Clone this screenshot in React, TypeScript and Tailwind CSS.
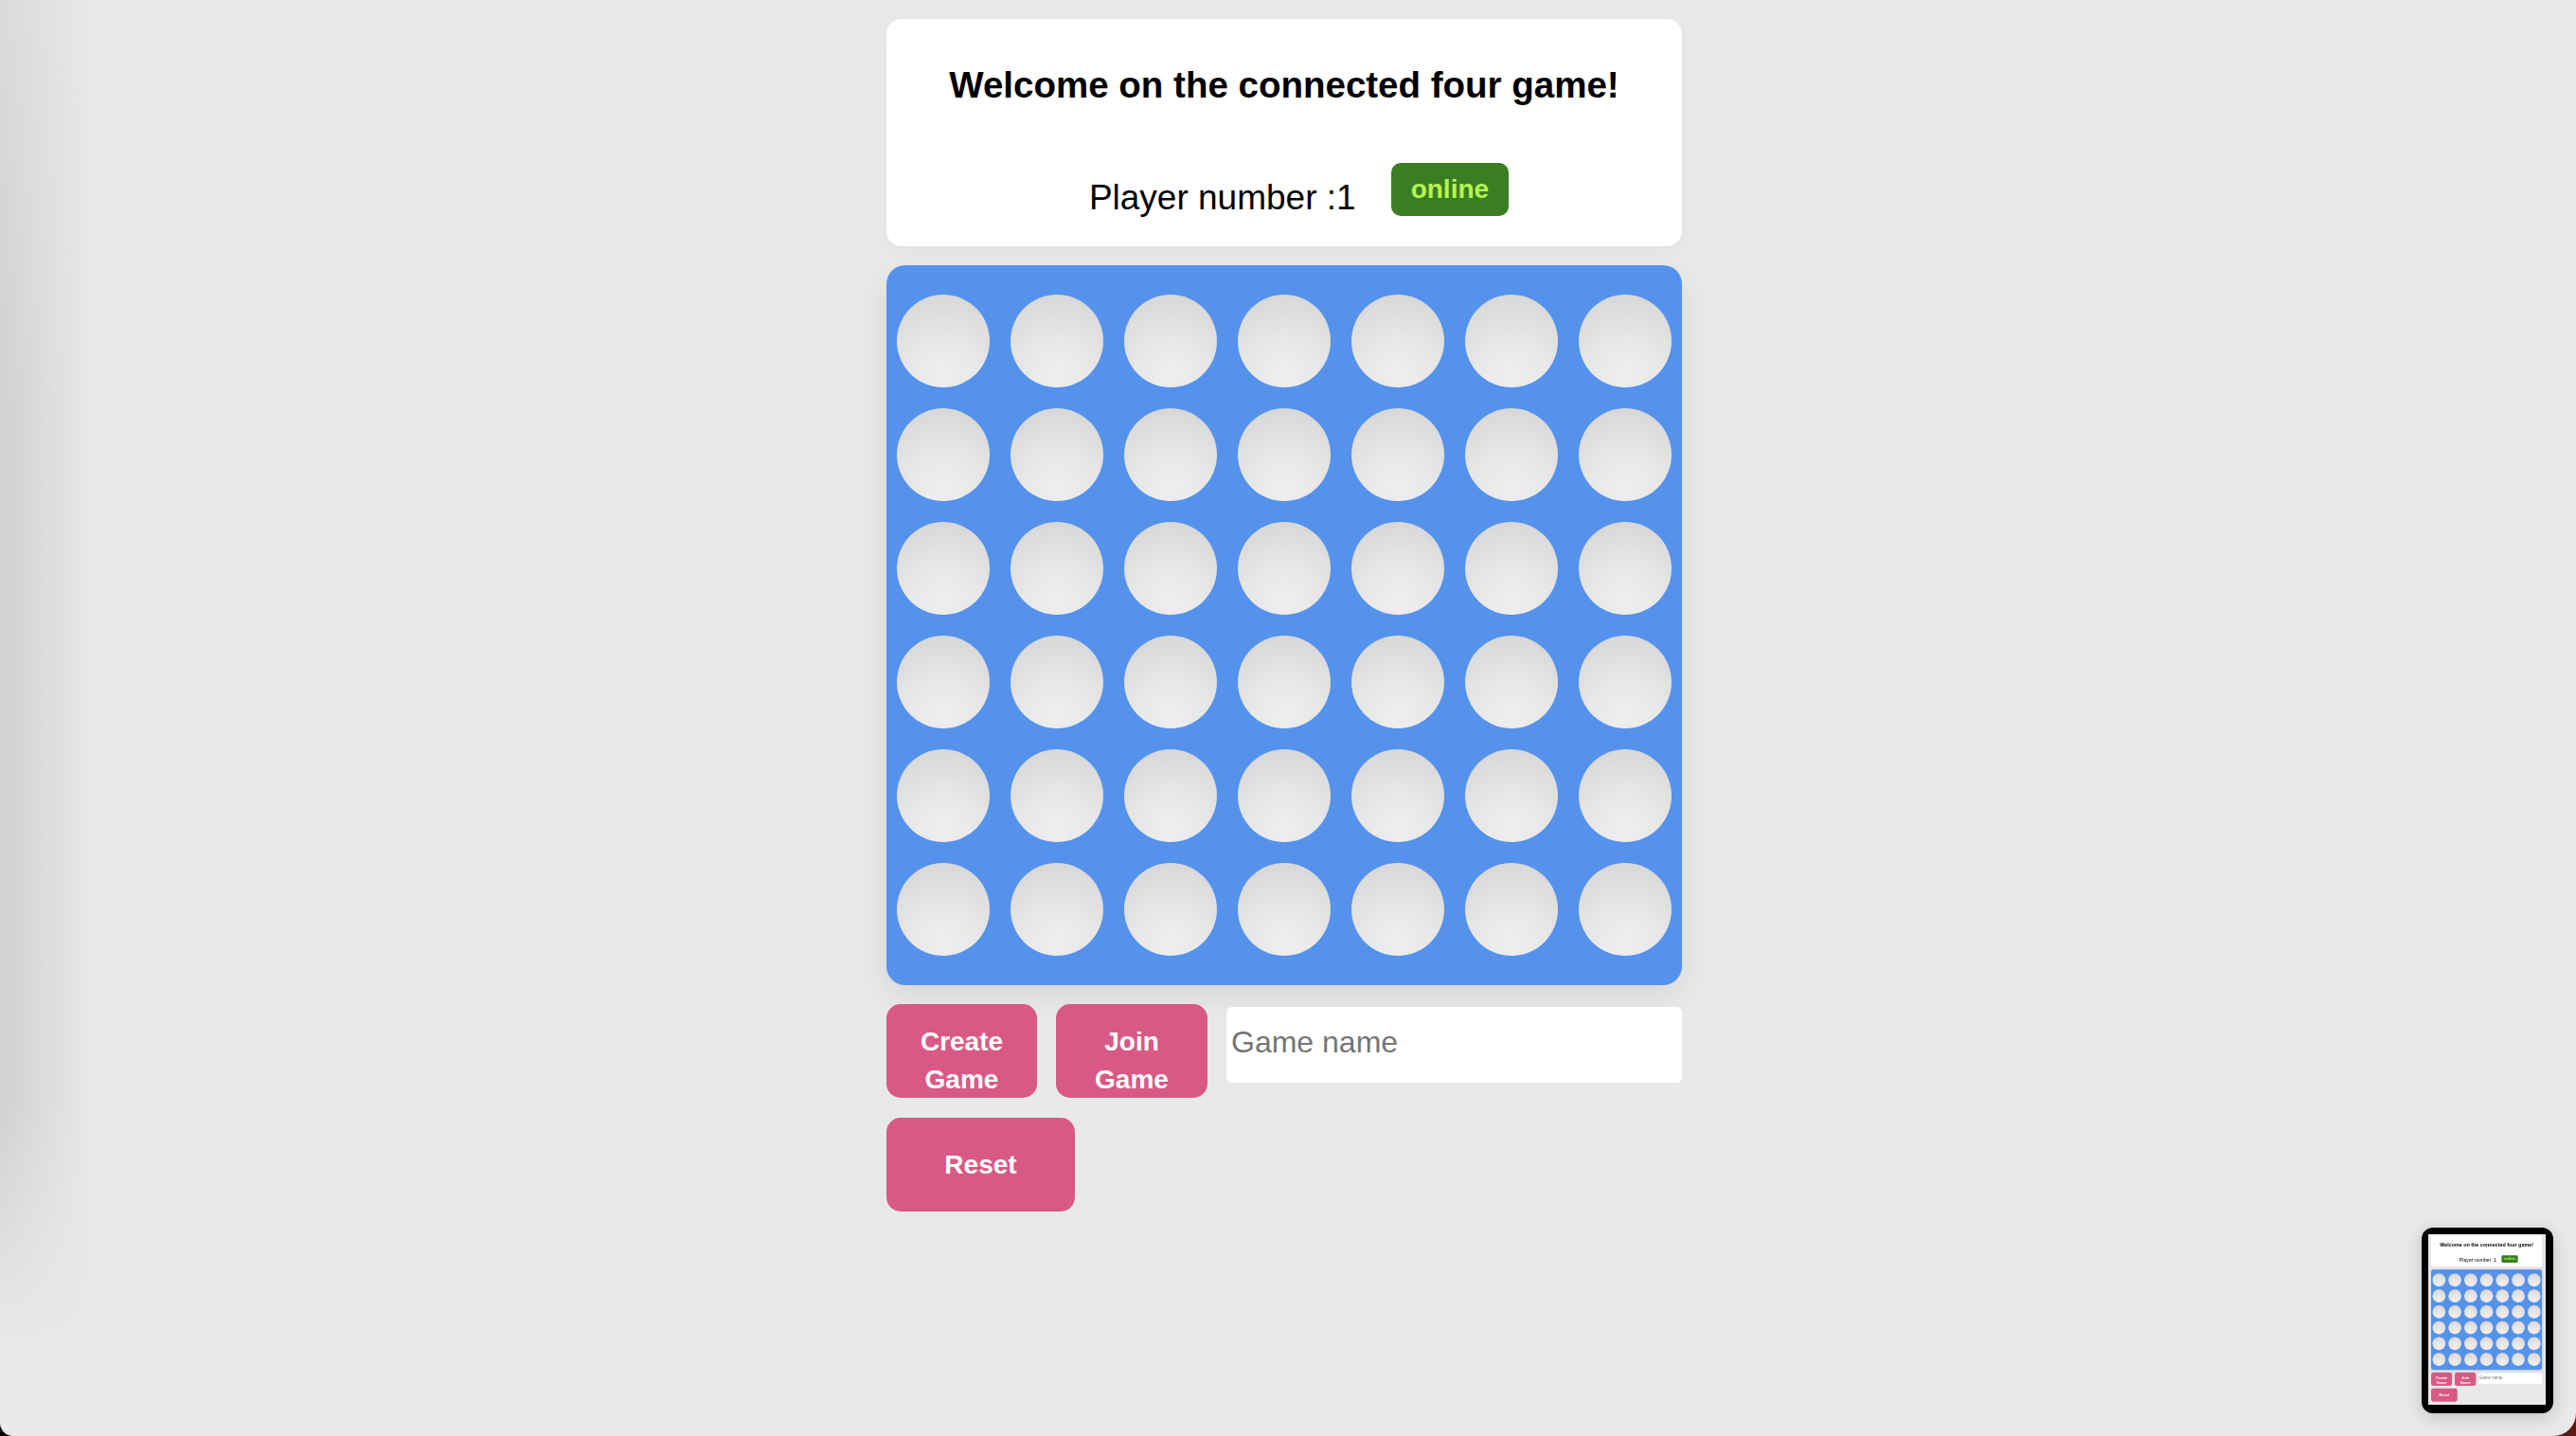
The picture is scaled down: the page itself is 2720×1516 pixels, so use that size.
import React from "react";

const ROWS = 6;
const COLS = 7;

const Game = () => {
  const cells = Array.from({ length: ROWS * COLS });

  return (
    <div className="w-[840px] font-['Liberation_Sans',Arial,sans-serif]">
      <div className="h-[240px] rounded-[16px] bg-white pt-[48px] text-black shadow-[0_4px_16px_rgba(0,0,0,0.04)]">
        <h3 className="text-center text-[38.5px] font-bold leading-[44px]">
          Welcome on the connected four game!
        </h3>
        <div className="mt-[60px] flex items-start justify-center pl-[31px]">
          <p className="mt-[16px] text-[37px] leading-[42px]">Player number :1</p>
          <span className="ml-[37px] h-[56px] rounded-[10px] bg-[#3a7d22] px-[21px] text-[28px] font-bold leading-[56px] text-[#b6f54f]">
            online
          </span>
        </div>
      </div>

      <div className="mt-[20px] grid h-[760px] grid-cols-7 rounded-[20px] bg-[#5592ec] py-[20px] shadow-[0_12px_30px_rgba(40,60,90,0.1)]">
        {cells.map((_, i) => (
          <div key={i} className="flex h-[120px] w-[120px] items-center justify-center">
            <div className="h-[98px] w-[98px] rounded-full bg-[radial-gradient(circle_at_50%_85%,#efefef_0%,#e7e7e7_40%,#d3d3d3_100%)]" />
          </div>
        ))}
      </div>

      <div className="mt-[20px] flex items-start gap-[20px]">
        <button className="h-[99px] w-[159px] rounded-[15px] bg-[#d85986] pt-[20px] text-[28px] font-bold leading-[40px] text-white">
          Create
          <br />
          Game
        </button>
        <button className="h-[99px] w-[160px] rounded-[15px] bg-[#d85986] pt-[20px] text-[28px] font-bold leading-[40px] text-white">
          Join
          <br />
          Game
        </button>
        <input
          placeholder="Game name"
          className="mt-[3px] h-[80px] min-w-0 flex-1 rounded-[6px] bg-white px-[5px] pb-[6px] text-[32px] text-black outline-none placeholder:text-[#757575]"
        />
      </div>

      <button className="mt-[21px] flex h-[99px] w-[199px] items-center justify-center rounded-[15px] bg-[#d85986] text-[28px] font-bold text-white">
        Reset
      </button>
    </div>
  );
};

const App = () => {
  return (
    <div className="h-[1516px] w-[2720px] overflow-hidden bg-[linear-gradient(to_right,#050505_50%,#5a1c10_50%)]">
      <div className="relative h-[1516px] w-[2720px] overflow-hidden rounded-bl-[14px] rounded-br-[24px] bg-[#e9e9e9]">
        <div className="absolute left-0 top-0 h-[1420px] w-[100px] bg-linear-to-r from-[#d0d0d0] to-[#e9e9e9]/0 [mask-image:linear-gradient(to_bottom,rgba(0,0,0,0.6),black_30%,black_82%,transparent)]" />

        <div className="relative ml-[936px] pt-[20px]">
          <Game />
        </div>

        <div className="absolute left-[2557px] top-[1296px] h-[196px] w-[139px] rounded-[12px] bg-black shadow-[0_4px_18px_rgba(0,0,0,0.18)]">
          <div className="absolute left-[7px] top-[7px] h-[180px] w-[124px] overflow-hidden bg-[#e9e9e9]">
            <div className="absolute left-[3px] top-[1px] origin-top-left scale-[0.1395]">
              <Game />
            </div>
          </div>
        </div>
      </div>
    </div>
  );
};

export default App;
